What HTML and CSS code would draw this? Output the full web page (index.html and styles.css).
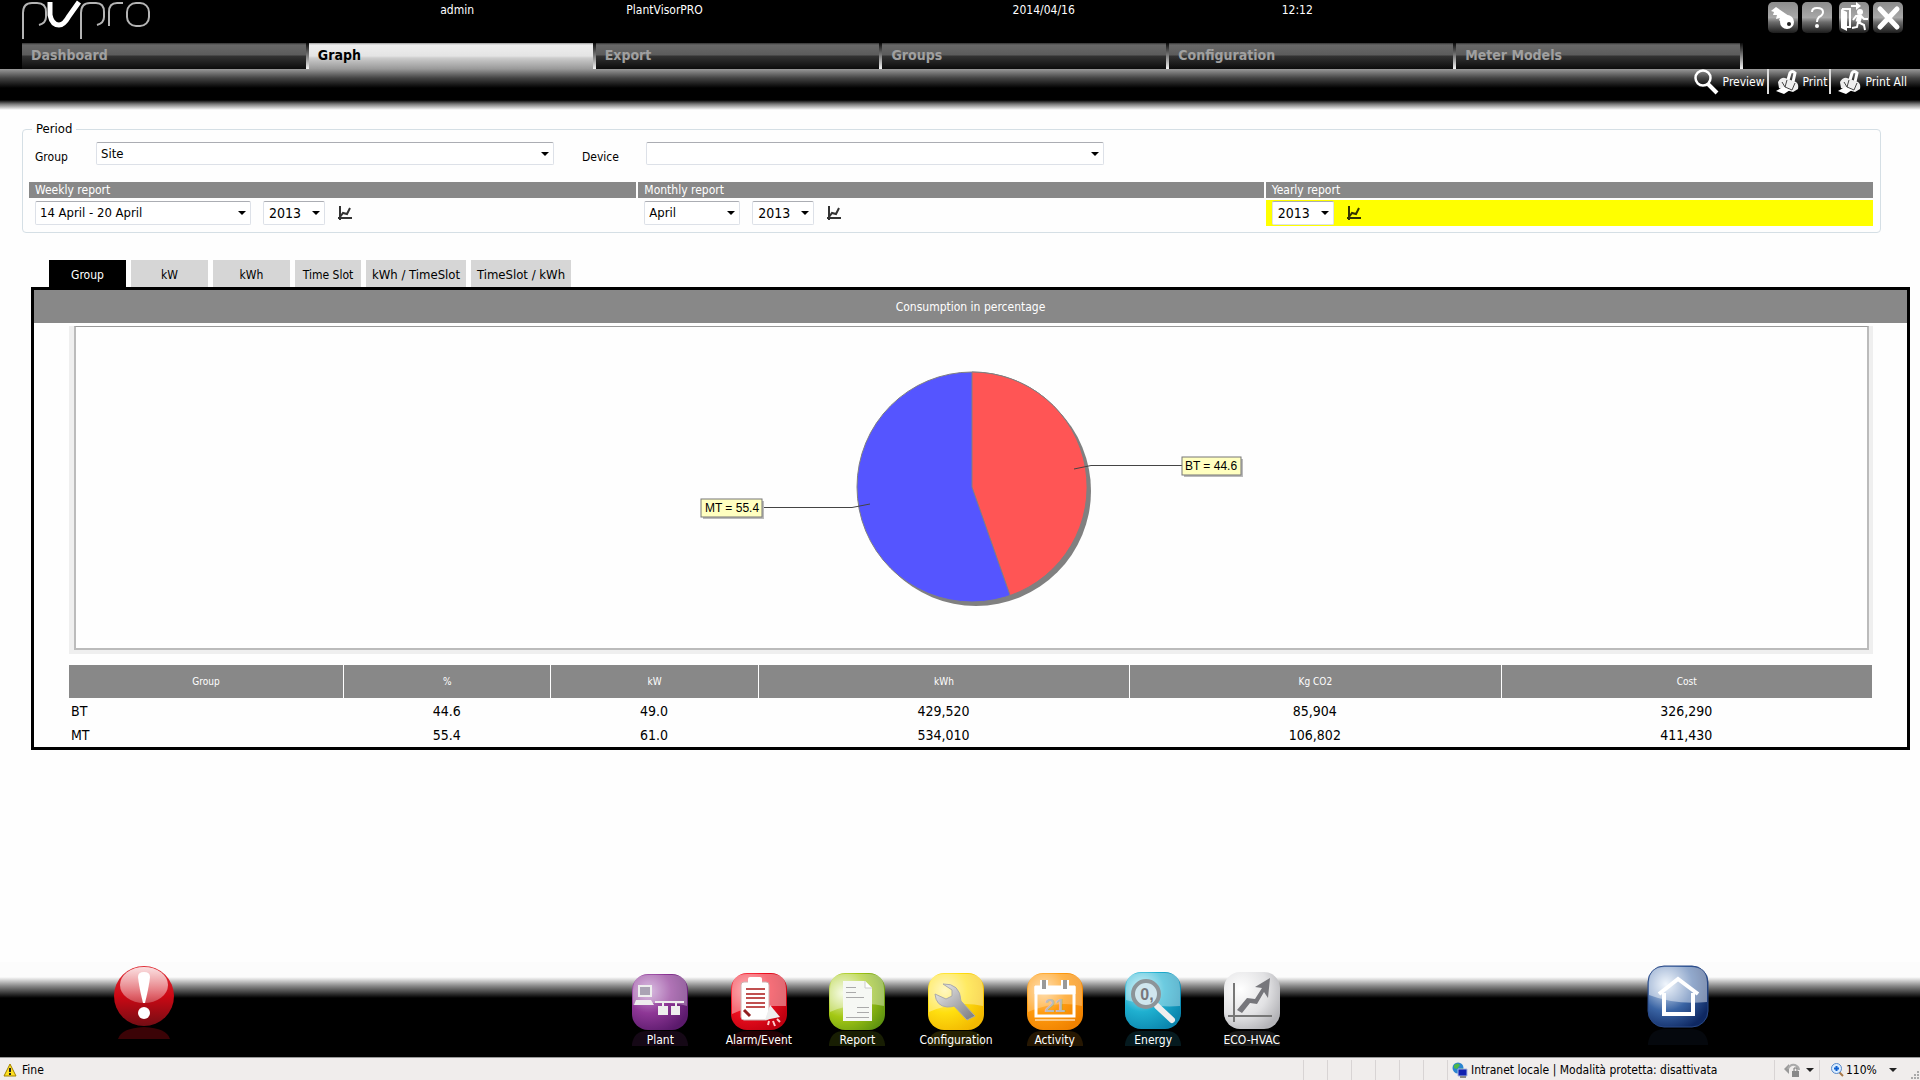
FILE: index.html
```
<!DOCTYPE html>
<html lang="en">
<head>
<meta charset="utf-8">
<meta name="viewport" content="width=device-width, initial-scale=1">
<title>PlantVisorPRO - Energy</title>
<link rel="stylesheet" href="styles.css">
</head>
<body>
<header class="top">
  <div class="top-info">
    <svg class="logo" width="130" height="40" viewBox="0 0 130 40" role="img" aria-label="pvpro">
      <defs>
        <radialGradient id="purple" cx=".3" cy=".3" r=".8"><stop offset="0" stop-color="#c9a0d4"/><stop offset=".5" stop-color="#8e3796"/><stop offset="1" stop-color="#5b1a6c"/></radialGradient>
        <radialGradient id="red" cx=".3" cy=".3" r=".8"><stop offset="0" stop-color="#ff8088"/><stop offset=".5" stop-color="#f01020"/><stop offset="1" stop-color="#c00010"/></radialGradient>
        <radialGradient id="green" cx=".25" cy=".35" r=".85"><stop offset="0" stop-color="#f2fad8"/><stop offset=".5" stop-color="#a4c814"/><stop offset="1" stop-color="#5f9410"/></radialGradient>
        <radialGradient id="yellow" cx=".3" cy=".3" r=".8"><stop offset="0" stop-color="#fff3a0"/><stop offset=".5" stop-color="#ffdf10"/><stop offset="1" stop-color="#f2b800"/></radialGradient>
        <radialGradient id="orange" cx=".3" cy=".3" r=".8"><stop offset="0" stop-color="#ffd59a"/><stop offset=".5" stop-color="#ff9c10"/><stop offset="1" stop-color="#f08200"/></radialGradient>
        <radialGradient id="cyan" cx=".3" cy=".3" r=".8"><stop offset="0" stop-color="#b8ecf6"/><stop offset=".5" stop-color="#1fb0d0"/><stop offset="1" stop-color="#0b86ae"/></radialGradient>
        <radialGradient id="silver" cx=".3" cy=".3" r=".8"><stop offset="0" stop-color="#ffffff"/><stop offset=".6" stop-color="#e2e2e4"/><stop offset="1" stop-color="#b4b4b8"/></radialGradient>
        <radialGradient id="navy" cx=".3" cy=".3" r=".8"><stop offset="0" stop-color="#e4eefa"/><stop offset=".55" stop-color="#3a64a4"/><stop offset="1" stop-color="#0e2862"/></radialGradient>
        <linearGradient id="ball" x2="0" y2="1"><stop offset="0" stop-color="#e03038"/><stop offset=".5" stop-color="#cc0814"/><stop offset="1" stop-color="#740d14"/></linearGradient>
        <linearGradient id="shine" x2="0" y2="1"><stop offset="0" stop-color="#fff" stop-opacity=".85"/><stop offset="1" stop-color="#fff" stop-opacity=".25"/></linearGradient>
        <linearGradient id="chrome" x2="0" y2="1"><stop offset="0" stop-color="#8c8c8c"/><stop offset=".5" stop-color="#a8a8a8"/><stop offset=".65" stop-color="#6c6c6c"/><stop offset="1" stop-color="#1c1c1c"/></linearGradient>
        <linearGradient id="metal" x2="1" y2="1"><stop offset="0" stop-color="#f0f0f0"/><stop offset="1" stop-color="#77777c"/></linearGradient>
      </defs>
      <g fill="none" stroke="#b4b4b4" stroke-width="2">
        <path d="M1 39V13Q1 3 10 3H15Q24 3 24 12V17Q24 23 17 25"/>
        <path d="M59 39V13Q59 3 68 3H74Q82 3 82 12V17Q82 23 75 25"/>
        <path d="M87 26V12Q87 3 95 3H101"/>
        <rect x="105" y="3" width="22" height="23" rx="9"/>
      </g>
      <path d="M28 2V15Q30 25 37 25Q42 25 47 16L57 2" fill="none" stroke="#fff" stroke-width="5"/>
    </svg>
    <span>admin</span>
    <span>PlantVisorPRO</span>
    <span>2014/04/16</span>
    <span>12:12</span>
    <div class="sys">
      <button type="button" aria-label="Login"><svg width="30" height="31" viewBox="0 0 30 31"><rect width="30" height="31" rx="5" fill="url(#chrome)"/><circle cx="19" cy="20" r="7" fill="#fff"/><path d="M3 9L8 5L21 14L14 21L11 18L12 16L8 17L9 13L5 13L6 10Z" fill="#fff"/><circle cx="21" cy="22" r="2" fill="#222"/></svg></button>
      <button type="button" aria-label="Help" class="gap-after"><svg width="30" height="31" viewBox="0 0 30 31"><rect width="30" height="31" rx="5" fill="url(#chrome)"/><path d="M10 10Q10 6 15 6Q21 6 21 10Q21 13 17 15Q15 17 15 20" fill="none" stroke="#fff" stroke-width="2"/><circle cx="15" cy="24" r="2" fill="#fff"/></svg></button>
      <button type="button" aria-label="Logout"><svg width="30" height="31" viewBox="0 0 30 31"><rect width="30" height="31" rx="5" fill="url(#chrome)"/><path d="M2 7L8 10V29L2 26Z" fill="#fff"/><path d="M3 7H11V25H8M12 4H18" fill="none" stroke="#fff" stroke-width="2"/><path d="M17 0L22 4L17 8Z" fill="#fff"/><circle cx="21" cy="10" r="3" fill="#fff"/><path d="M21 13L19 20" stroke="#fff" stroke-width="5"/><path d="M14 18L17 14L22 14L25 17L29 17M19 20L25 23L26 28M19 20L18 25L13 26" fill="none" stroke="#fff" stroke-width="2"/></svg></button>
      <button type="button" aria-label="Close"><svg width="30" height="31" viewBox="0 0 30 31"><rect width="30" height="31" rx="5" fill="url(#chrome)"/><path d="M7 7L24 25M24 7L7 25" stroke="#fff" stroke-width="5" stroke-linecap="round"/></svg></button>
    </div>
  </div>
  <nav class="main-tabs" aria-label="Sections">
    <a href="#dashboard">Dashboard</a>
    <a href="#graph" class="on">Graph</a>
    <a href="#export">Export</a>
    <a href="#groups">Groups</a>
    <a href="#configuration">Configuration</a>
    <a href="#meters">Meter Models</a>
  </nav>
  <div class="tools">
    <button type="button"><svg width="26" height="26" viewBox="0 0 26 26"><circle cx="9" cy="9" r="7.500" fill="none" stroke="#fff" stroke-width="2.500"/><path d="M14 15L23 24" stroke="#fff" stroke-width="4"/></svg>Preview</button>
    <button type="button"><svg width="24" height="26" viewBox="0 0 24 26"><path d="M12 11L14 4Q16 1 19 4L17 13" fill="none" stroke="#fff" stroke-width="3"/><path d="M2 13Q5 8 9 9L20 13Q23 15 22 20L17 23L3 19Z" fill="#eee"/><path d="M6 13L9 18M11 11L9 18L16 21L19 14" fill="none" stroke="#444"/><path d="M0 22L7 18L14 21L8 25Z" fill="#fff"/></svg>Print</button>
    <button type="button"><svg width="24" height="26" viewBox="0 0 24 26"><path d="M12 11L14 4Q16 1 19 4L17 13" fill="none" stroke="#fff" stroke-width="3"/><path d="M2 13Q5 8 9 9L20 13Q23 15 22 20L17 23L3 19Z" fill="#eee"/><path d="M6 13L9 18M11 11L9 18L16 21L19 14" fill="none" stroke="#444"/><path d="M0 22L7 18L14 21L8 25Z" fill="#fff"/></svg>Print All</button>
  </div>
</header>

<main>
  <form>
  <fieldset class="period">
    <legend>Period</legend>
    <div class="filters">
      <label for="group">Group</label>
      <select id="group"><option>Site</option></select>
      <label for="device" class="second">Device</label>
      <select id="device"><option></option></select>
    </div>
    <div class="reports">
      <section>
        <h2>Weekly report</h2>
        <div class="pick">
          <select class="week" aria-label="Week"><option>14 April - 20 April</option></select>
          <select class="year" aria-label="Year of the week"><option>2013</option></select>
          <button type="button" aria-label="Show weekly graph"><svg width="15" height="14" viewBox="0 0 15 14"><path d="M3 0V14M1 12H15M3 11L6 7L10 8L13 2" fill="none" stroke="#333" stroke-width="2"/></svg></button>
        </div>
      </section>
      <section>
        <h2>Monthly report</h2>
        <div class="pick">
          <select class="month" aria-label="Month"><option>April</option></select>
          <select class="year" aria-label="Year of the month"><option>2013</option></select>
          <button type="button" aria-label="Show monthly graph"><svg width="15" height="14" viewBox="0 0 15 14"><path d="M3 0V14M1 12H15M3 11L6 7L10 8L13 2" fill="none" stroke="#333" stroke-width="2"/></svg></button>
        </div>
      </section>
      <section>
        <h2>Yearly report</h2>
        <div class="pick chosen">
          <select class="year" aria-label="Year"><option>2013</option></select>
          <button type="button" aria-label="Show yearly graph"><svg width="15" height="14" viewBox="0 0 15 14"><path d="M3 0V14M1 12H15M3 11L6 7L10 8L13 2" fill="none" stroke="#330" stroke-width="2"/></svg></button>
        </div>
      </section>
    </div>
  </fieldset>
  </form>

  <div class="views">
    <button type="button" class="short on">Group</button>
    <button type="button" class="short">kW</button>
    <button type="button" class="short">kWh</button>
    <button type="button">Time Slot</button>
    <button type="button" class="long">kWh / TimeSlot</button>
    <button type="button" class="long">TimeSlot / kWh</button>
  </div>

  <section class="panel">
    <h1>Consumption in percentage</h1>
    <div class="chart">
      <div class="plot">
        <svg width="560" height="321" viewBox="0 0 560 321" role="img" aria-label="Pie chart of consumption">
          <circle cx="284" cy="164" r="115" fill="#808080"/>
          <circle cx="280" cy="160" r="115" fill="#5555ff" stroke="#808080"/>
          <path d="M280 160V45A115 115 0 0 1 318.200 268.500Z" fill="#ff5555" stroke="#808080"/>
          <path d="M71 180.500H160L178 177M382 142L399 138.500H490" fill="none" stroke="#444"/>
          <rect x="11" y="174" width="61" height="18" fill="#bbb"/>
          <rect x="9" y="172" width="61" height="18" fill="#ffffc0" stroke="#777"/>
          <rect x="492" y="132" width="59" height="18" fill="#bbb"/>
          <rect x="490" y="130" width="59" height="18" fill="#ffffc0" stroke="#777"/>
          <text class="tag" x="40" y="185">MT = 55.4</text>
          <text class="tag" x="519" y="143">BT = 44.6</text>
        </svg>
      </div>
    </div>
    <table>
      <colgroup><col class="c-name"><col class="c-small"><col class="c-small"><col><col><col></colgroup>
      <thead><tr><th>Group</th><th>%</th><th>kW</th><th>kWh</th><th>Kg CO2</th><th>Cost</th></tr></thead>
      <tbody>
        <tr><td>BT</td><td>44.6</td><td>49.0</td><td>429,520</td><td>85,904</td><td>326,290</td></tr>
        <tr><td>MT</td><td>55.4</td><td>61.0</td><td>534,010</td><td>106,802</td><td>411,430</td></tr>
      </tbody>
    </table>
  </section>
</main>

<footer>
  <div class="dock">
    <a href="#alerts" class="alert" aria-label="Active alarms"><svg width="62" height="78" viewBox="0 0 62 78"><circle cx="31" cy="31" r="30" fill="url(#ball)"/><ellipse cx="31" cy="20" rx="24" ry="18" fill="url(#shine)"/><path d="M25 12Q25 7 31 7Q37 7 37 12Q36 22 32 38H30Q26 22 25 12Z" fill="#fff"/><circle cx="31" cy="48" r="6" fill="#fff"/><path d="M5 74Q8 63 31 62Q54 63 57 74Z" fill="#4a0408" opacity=".8"/></svg></a>
    <nav class="apps" aria-label="Applications">
      <a href="#plant"><svg width="58" height="74" viewBox="0 0 58 74"><path d="M1 74V72Q3 59 16 59H42Q55 59 57 72V74Z" fill="#8e3796" opacity=".15"/><rect x="1" y="2" width="56" height="56" rx="16" fill="url(#purple)"/><path d="M2 18Q2 3 17 3H41Q56 3 56 18V34Q36 28 2 33Z" fill="#fff" opacity=".3"/><g fill="none" stroke="#eee" stroke-width="2"><rect x="8" y="14" width="12" height="10" fill="#aaa3b4"/><path d="M24 30H53M32 30V36M45 30V36"/></g><path d="M5 28H20L23 33H3ZM27 34H37V43H27ZM40 34H49V43H40Z" fill="#eee"/></svg>Plant</a>
      <a href="#alarm"><svg width="58" height="74" viewBox="0 0 58 74"><path d="M1 74V72Q3 59 16 59H42Q55 59 57 72V74Z" fill="#f01020" opacity=".15"/><rect x="1" y="1" width="56" height="57" rx="16" fill="url(#red)"/><path d="M2 17Q2 2 17 2H41Q56 2 56 17V34H38Q20 34 2 42Z" fill="#fff" opacity=".4"/><rect x="11" y="10" width="28" height="38" rx="3" fill="#fff" stroke="#ccb0b0"/><rect x="18" y="5" width="14" height="8" rx="2" fill="#fff"/><path d="M16 17H35M16 22H35M16 26H35M16 31H35M16 35H35" stroke="#c05050" stroke-width="2"/><path d="M14 38L20 44" stroke="#902020" stroke-width="3"/><path d="M40 33L50 45L35 48Z" fill="#eee"/><path d="M39 49L38 53M43 49L45 54M47 47L50 50" stroke="#fcc" stroke-width="2"/></svg>Alarm/Event</a>
      <a href="#report"><svg width="58" height="74" viewBox="0 0 58 74"><path d="M1 74V72Q3 59 16 59H42Q55 59 57 72V74Z" fill="#a4c814" opacity=".15"/><rect x="1" y="1" width="56" height="57" rx="16" fill="url(#green)"/><path d="M2 17Q2 2 17 2H41Q56 2 56 17V34Q30 28 2 40Z" fill="#fff" opacity=".35"/><path d="M15 9H37L44 16V49H15Z" fill="#f6f8f4"/><path d="M37 9V16H44" fill="#fff" stroke="#ccc"/><path d="M18 15.500H28M18 20.500H28M18 25.500H36M29 35.500H41M29 40.500H41M18 45.500H41" stroke="#aaa"/></svg>Report</a>
      <a href="#config"><svg width="58" height="74" viewBox="0 0 58 74"><path d="M1 74V72Q3 59 16 59H42Q55 59 57 72V74Z" fill="#ffdf10" opacity=".15"/><rect x="1" y="1" width="56" height="57" rx="16" fill="url(#yellow)"/><path d="M2 17Q2 2 17 2H41Q56 2 56 17V34Q30 28 2 40Z" fill="#fff" opacity=".35"/><path d="M16 12L25 18V24L19 27L8 22Q9 34 20 35Q25 35 27 34L40 48L48 44L34 29Q33 11 16 12Z" fill="url(#metal)" stroke="#aaa"/></svg>Configuration</a>
      <a href="#activity"><svg width="58" height="74" viewBox="0 0 58 74"><path d="M1 74V72Q3 59 16 59H42Q55 59 57 72V74Z" fill="#ff9c10" opacity=".15"/><rect x="1" y="1" width="56" height="57" rx="16" fill="url(#orange)"/><path d="M2 17Q2 2 17 2H41Q56 2 56 17V34Q30 28 2 40Z" fill="#fff" opacity=".25"/><rect x="10" y="16" width="38" height="28" fill="none" stroke="#fff" stroke-width="3"/><path d="M9 14H49V22H9ZM9 48H49" fill="#fff" stroke="#fff"/><path d="M18 8V18M39 8V18" stroke="#fff" stroke-width="8"/><path d="M18 8V17M39 8V17" stroke="#999" stroke-width="4"/><text class="day" x="29" y="40">21</text></svg>Activity</a>
      <a href="#energy"><svg width="58" height="74" viewBox="0 0 58 74"><path d="M1 74V72Q3 59 16 59H42Q55 59 57 72V74Z" fill="#1fb0d0" opacity=".15"/><rect x="1" y="0" width="56" height="57" rx="16" fill="url(#cyan)"/><path d="M2 16Q2 1 17 1H41Q56 1 56 16V34Q30 36 2 28Z" fill="#fff" opacity=".35"/><path d="M33 34L48 48" stroke="#eee" stroke-width="6" stroke-linecap="round"/><circle cx="22" cy="22" r="13" fill="#cfe6ee" stroke="#8c9498" stroke-width="4"/><text class="digit" x="23" y="28">0,</text></svg>Energy</a>
      <a href="#eco"><svg width="58" height="74" viewBox="0 0 58 74"><path d="M1 74V72Q3 59 16 59H42Q55 59 57 72V74Z" fill="#aaa" opacity=".15"/><rect x="1" y="0" width="56" height="57" rx="16" fill="url(#silver)"/><path d="M11 11V50M5 44H49" stroke="#777" stroke-width="2"/><path d="M14 38L24 26L32 27L39 16L32 15L47 6L45 26L41 20L34 32L27 31L19 41Z" fill="#77777c"/></svg>ECO-HVAC</a>
    </nav>
    <a href="#home" class="home" aria-label="Home"><svg width="62" height="80" viewBox="0 0 62 80"><path d="M1 80V78Q3 64 18 64H44Q59 64 61 78V80Z" fill="#3a64a4" opacity=".08"/><rect x="1" y="1" width="60" height="61" rx="16" fill="url(#navy)" stroke="#2a4a88"/><path d="M2 18Q2 2 18 2H44Q60 2 60 18V37Q28 40 2 30Z" fill="#fff" opacity=".45"/><path d="M17 28V49H46V28" fill="none" stroke="#fff" stroke-width="4"/><path d="M12 29L31 14L51 29" fill="none" stroke="#fff" stroke-width="4"/></svg></a>
  </div>
  <div class="status">
    <svg width="14" height="14" viewBox="0 0 14 14"><path d="M7 1L13 13H1Z" fill="#ffe020" stroke="#a08000"/><path d="M7 5V9M7 10V12" stroke="#222" stroke-width="2"/></svg>
    <span class="done">Fine</span>
    <i></i><i></i><i></i><i></i><i></i><i></i>
    <span class="zone"><svg width="16" height="16" viewBox="0 0 16 16"><circle cx="6" cy="6" r="5.500" fill="#2a84d0"/><path d="M2 3Q6 0 8 3L5 7L2 6ZM8 7L11 6L9 11Z" fill="#50b848"/><path d="M6 7H15V14H6Z" fill="#1020b0" stroke="#a8b8e0"/><path d="M8 15H14" stroke="#888" stroke-width="2"/></svg>Intranet locale | Modalità protetta: disattivata</span>
    <button type="button" class="lock" aria-label="Security"><svg width="32" height="16" viewBox="0 0 32 16"><path d="M0 7L5 2V12Z" fill="#999"/><path d="M4 7Q6 2 11 3Q15 5 15 8" fill="none" stroke="#aaa" stroke-width="2"/><path d="M8 9H15V15H8Z" fill="#888"/><path d="M10 9V6H13V9" fill="none" stroke="#777"/><path d="M22 6H30L26 10Z" fill="#222"/></svg></button>
    <button type="button" class="zoom"><svg width="13" height="14" viewBox="0 0 13 14"><path d="M8 9L12 13" stroke="#a87848" stroke-width="2"/><circle cx="5.500" cy="5.500" r="5" fill="#d8ecff" stroke="#5888c8"/><path d="M5.500 3V8M3 5.500H8" stroke="#1060d0" stroke-width="2"/></svg>110%<svg class="drop" width="8" height="4" viewBox="0 0 8 4"><path d="M0 0H8L4 4Z" fill="#222"/></svg></button>
    <svg class="grip" width="9" height="9" viewBox="0 0 9 9"><path d="M6 0H8V2H6ZM3 3H5V5H3ZM6 3H8V5H6ZM0 6H2V8H0ZM3 6H5V8H3ZM6 6H8V8H6Z" fill="#aaa"/></svg>
  </div>
</footer>
</body>
</html>
```
FILE: styles.css
```
* { box-sizing: border-box; }
body {
  margin: 0;
  min-height: 100vh;
  display: flex;
  flex-direction: column;
  background: #fefefe;
  color: #000;
  font: 12px/16px "DejaVu Sans Condensed", "DejaVu Sans", Tahoma, sans-serif;
}
h1, h2 { margin: 0; font-size: inherit; font-weight: normal; }
a { color: inherit; text-decoration: none; }
button { margin: 0; padding: 0; border: 0; background: none; color: inherit; font: inherit; }
svg { display: block; flex: none; }

.top { background: #000; color: #fff; }
.top-info {
  display: grid;
  grid-template-columns: 418fr 186fr 386fr 269fr 486fr auto;
  height: 43px;
  padding-left: 22px;
}
.top-info span { padding-top: 2px; }
.sys { display: flex; gap: 4px; padding: 2px 17px 0 0; align-items: flex-start; }
.sys .gap-after { margin-right: 3px; }

.main-tabs { display: flex; height: 26px; margin: 0 177px 0 22px; }
.main-tabs a {
  flex: 1;
  padding: 4px 9px;
  border-right: 3px solid;
  border-image: linear-gradient(#000, #fff) 1;
  background: linear-gradient(#333 0, #686868 2px, #5c5c5c 12px, #333 13px, #0c0c0c 26px);
  color: #a0a0a0;
  font-size: 14px;
  font-weight: bold;
}
.main-tabs .on {
  background: linear-gradient(#999 0, #eee 2px, #e4e4e4 13px, #ccc 15px, #999 26px);
  color: #000;
}
.tools {
  display: flex;
  justify-content: flex-end;
  height: 41px;
  padding-right: 11px;
  background: linear-gradient(#999 0, #444 9px, #000 19px, #000 31px, #777 35px, #fefefe 41px);
}
.tools button {
  display: flex;
  align-items: center;
  gap: 3px;
  height: 25px;
  padding: 0 2px 0 7px;
  border-left: 2px solid #ddd;
}
.tools button:first-child { border: 0; }

main { flex: 1; padding-top: 10px; }
.period {
  margin: 0 39px 0 22px;
  padding: 4px 7px 6px 6px;
  border: 1px solid #d5dfe5;
  border-radius: 4px;
}
.period legend { padding: 0 4px; margin-left: 3px; font-size: 13px; line-height: 18px; }
.filters {
  display: grid;
  grid-template-columns: 61px 458fr 92px 458fr 769fr;
  padding: 0 0 17px 6px;
}
.filters label { padding-top: 7px; }
.filters .second { padding-left: 28px; }
select {
  appearance: none;
  height: 23px;
  padding: 0 4px;
  border: 1px solid #dde1e8;
  border-top-color: #abadb3;
  border-radius: 2px;
  background: #fff url("data:image/svg+xml,%3Csvg xmlns='http://www.w3.org/2000/svg' width='8' height='4'%3E%3Cpath d='M0 0H8L4 4Z'/%3E%3C/svg%3E") no-repeat right 4px center;
  color: #000;
  font: inherit;
  font-size: 13px;
}
.reports { display: grid; grid-template-columns: 607fr 625fr 607fr; gap: 2px; }
.reports h2 { padding-left: 6px; background: #888; color: #fff; }
.pick { display: flex; align-items: center; height: 26px; margin-top: 2px; padding-left: 6px; }
.pick select { height: 24px; margin-right: 12px; }
.week { width: 216px; }
.month { width: 96px; }
.year { width: 62px; padding-left: 5px; font-size: 14px; }
.chosen { background: #ff0; }

.views { display: flex; gap: 5px; margin: 27px 49px 0; }
.views button { width: 66px; height: 27px; padding-top: 2px; background: #d6d6d6; }
.views .short { width: 77px; }
.views .long { width: 100px; font-size: 13px; }
.views .on { background: #000; color: #fff; }

.panel { margin: 0 10px 0 31px; border: 3px solid #000; }
.panel h1 { padding-top: 1px; background: #888; color: #fff; line-height: 32px; text-align: center; }
.chart { margin: 3px 34px 0 35px; padding: 0 4px 4px 5px; background: #efefef; }
.plot {
  display: flex;
  justify-content: center;
  border: 2px solid #bbb;
  border-top: 1px solid #999;
  background: #fefefe;
}
.tag { font: 12px "Liberation Sans", Arial, sans-serif; text-anchor: middle; }
table { width: calc(100% - 70px); margin: 11px 35px 1px; border-spacing: 0; table-layout: fixed; }
.c-name { width: 15.2%; }
.c-small { width: 11.5%; }
th { height: 33px; padding: 0; border-left: 1px solid #fff; background: #888; color: #fff; font-size: 10px; font-weight: normal; }
th:first-child { border: 0; }
td { height: 24px; padding: 2px 0 0; text-align: center; font-size: 14px; }
td:first-child { padding-left: 2px; text-align: left; }

.dock {
  display: grid;
  grid-template-columns: 611fr 690px 619fr;
  height: 95px;
  background: linear-gradient(#fcfcfc 0, #fcfcfc 15px, #888 24px, #000 36px);
  color: #fff;
}
.alert { padding: 3px 0 0 113px; }
.home { padding: 3px 0 0 346px; }
.apps { display: flex; }
.apps a { flex: 1; display: flex; flex-direction: column; align-items: center; padding-top: 10px; }
.apps svg { margin-bottom: -14px; }
.day { font: bold 19px "Liberation Sans", Arial, sans-serif; fill: #bbb; text-anchor: middle; }
.digit { font: bold 16px "Liberation Sans", Arial, sans-serif; fill: #77777c; text-anchor: middle; }

.status {
  display: flex;
  align-items: center;
  height: 23px;
  padding: 2px 0 0 3px;
  border-top: 1px solid #999;
  background: #f0edec;
}
.done { flex: 1; padding-left: 5px; }
.status i { width: 24px; height: 20px; border-left: 1px solid #d8d4d4; }
.zone { display: flex; align-items: center; gap: 3px; width: 327px; height: 20px; padding-left: 4px; border-left: 1px solid #d8d4d4; }
.lock { width: 45px; height: 20px; padding-left: 9px; border-left: 1px solid #d8d4d4; }
.zoom { display: flex; align-items: center; gap: 2px; width: 92px; height: 20px; padding-left: 11px; border-left: 1px solid #d8d4d4; }
.zoom .drop { margin-left: 10px; }
.grip { align-self: flex-end; }
```
